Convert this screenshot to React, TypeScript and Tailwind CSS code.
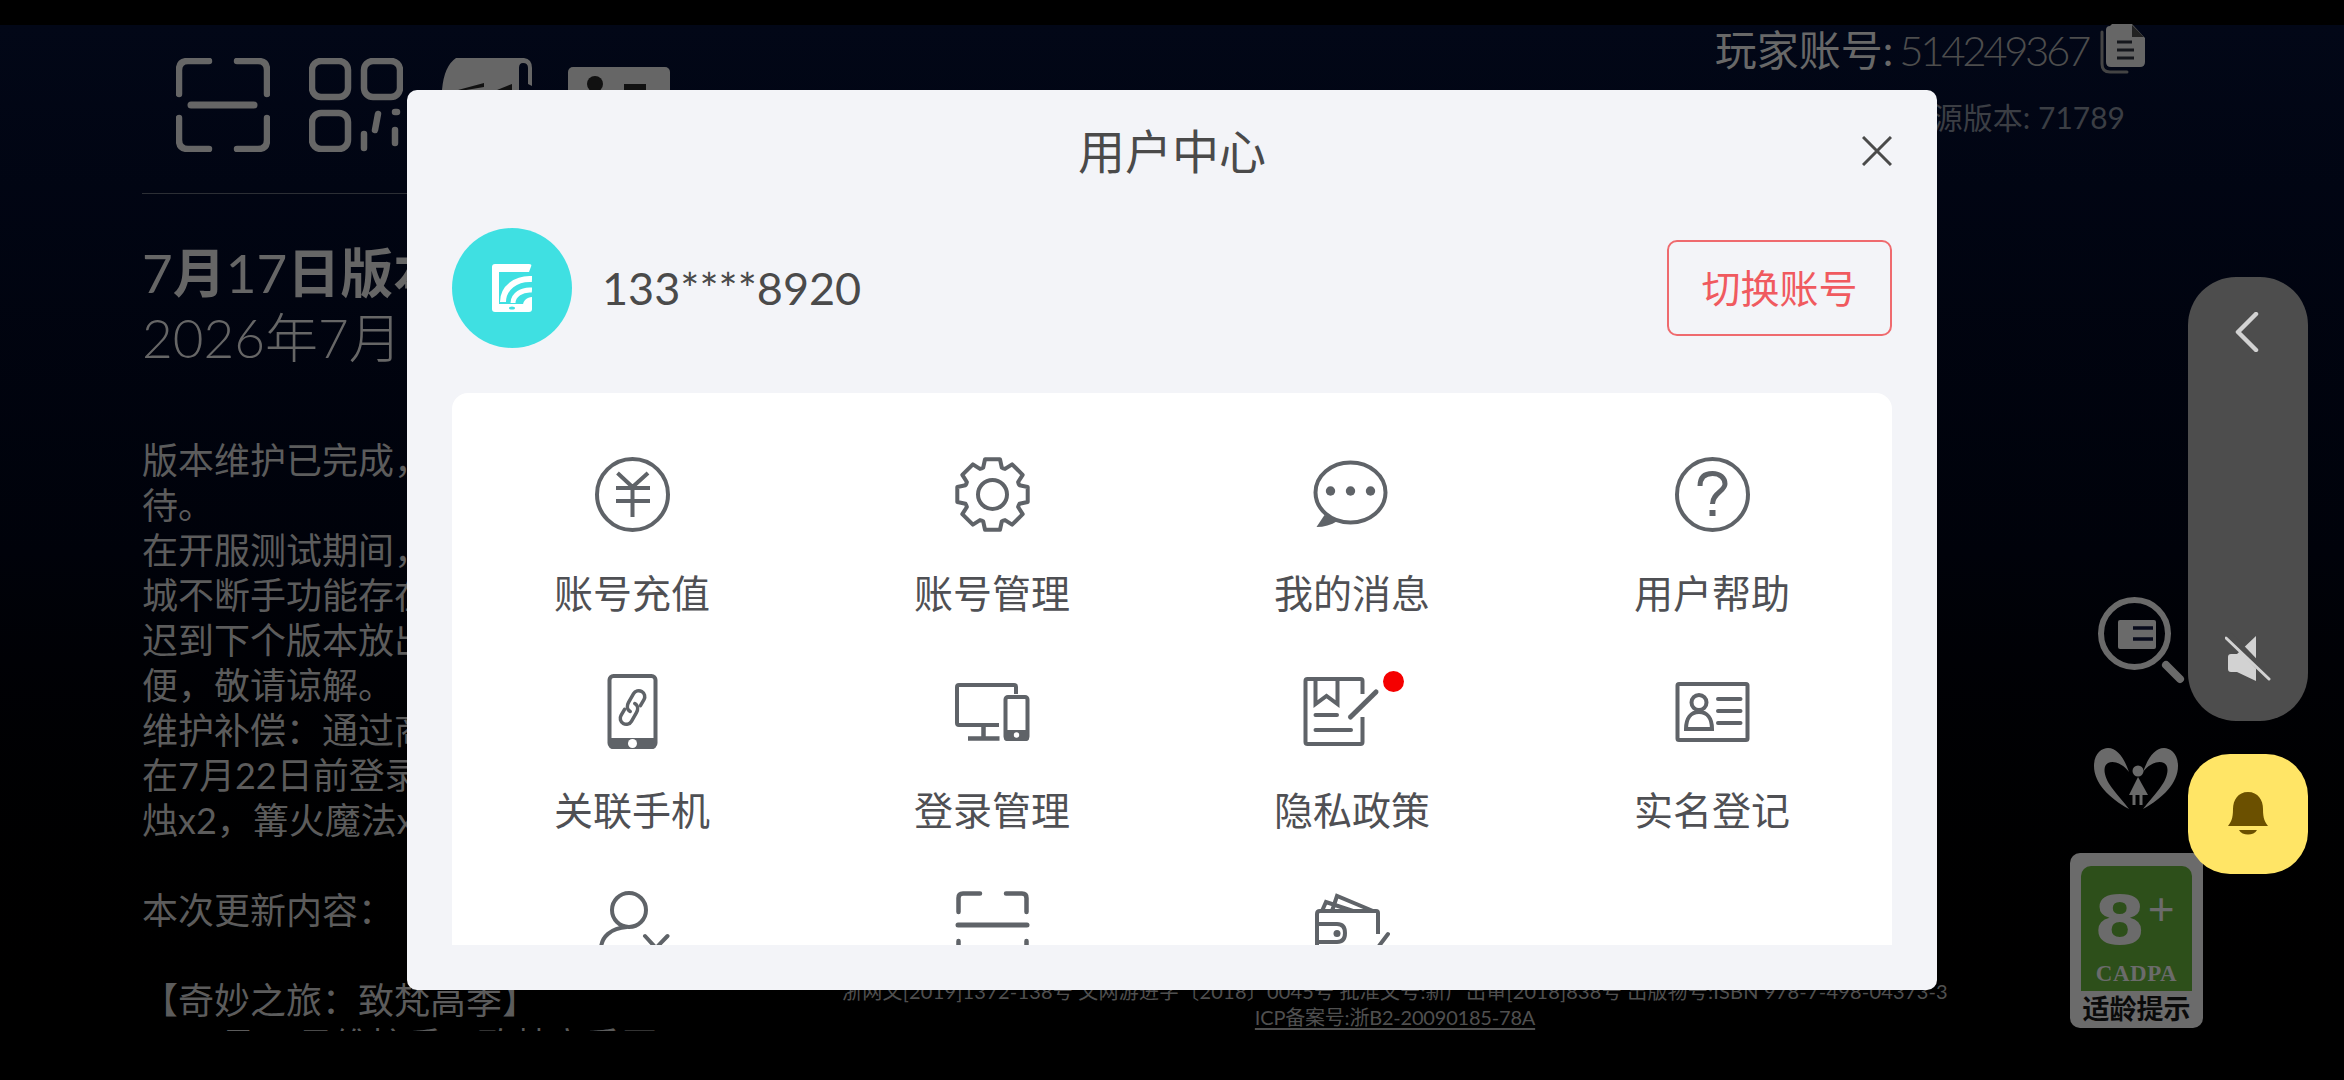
const bodyLines = [
  "版本维护已完成，",
  "待。",
  "在开服测试期间，",
  "城不断手功能存在",
  "迟到下个版本放出",
  "便，敬请谅解。",
  "维护补偿：通过商",
  "在7月22日前登录",
  "烛x2，篝火魔法x",
  "",
  "本次更新内容：",
  "",
  "【奇妙之旅：致梵高季】",
  "1、7月17日维护后，致梵高季开",
];

function gearPath() {
  const cx = 37.5;
  const cy = 37.5;
  const pt = (deg: number, r: number) => {
    const a = (deg * Math.PI) / 180;
    return `${(cx + r * Math.cos(a)).toFixed(2)} ${(cy + r * Math.sin(a)).toFixed(2)}`;
  };
  let d = "";
  for (let i = 0; i < 8; i++) {
    const a = i * 45 - 90;
    d += `${i === 0 ? "M" : "L"}${pt(a - 19, 28.5)} L${pt(a - 12, 36)} L${pt(a + 12, 36)} L${pt(a + 19, 28.5)} `;
    d += `A 9 9 0 0 0 ${pt(a + 26, 28.5)} `;
  }
  return d + "Z";
}

function YenIcon() {
  return (
    <svg width="75" height="75" viewBox="0 0 75 75" fill="none" stroke="#5f6368" strokeWidth="4">
      <circle cx="37.5" cy="37.5" r="35.5" />
      <path d="M22.5 16 L37.5 30 L53 16 M21 31 H55 M21 44 H55 M37.5 30 V60" />
    </svg>
  );
}

function GearIcon() {
  return (
    <svg width="75" height="75" viewBox="0 0 75 75" fill="none" stroke="#5f6368" strokeWidth="4" strokeLinejoin="round">
      <path d={gearPath()} />
      <circle cx="37.5" cy="37.5" r="14.5" />
    </svg>
  );
}

function ChatIcon() {
  return (
    <svg width="75" height="75" viewBox="0 0 75 75" fill="none" className="overflow-visible">
      <ellipse cx="35.5" cy="35.5" rx="35" ry="30" stroke="#5f6368" strokeWidth="4" />
      <path d="M9.5 58 L1.5 70 C9 70 16 68 22.5 64 Z" fill="#5f6368" />
      <circle cx="15.5" cy="34" r="4.7" fill="#5f6368" />
      <circle cx="35.5" cy="34" r="4.7" fill="#5f6368" />
      <circle cx="55.5" cy="34" r="4.7" fill="#5f6368" />
    </svg>
  );
}

function HelpIcon() {
  return (
    <svg width="75" height="75" viewBox="0 0 75 75" fill="none" stroke="#5f6368" strokeWidth="4">
      <circle cx="37.5" cy="37.5" r="35.5" />
      <path d="M25 29 C25 20 30 16.5 37.5 16.5 C45 16.5 50 21 50 27 C50 34 37.5 36 37.5 47" strokeWidth="5" />
      <rect x="34.5" y="53" width="6" height="6" fill="#5f6368" stroke="none" />
    </svg>
  );
}

function PhoneLinkIcon() {
  return (
    <svg width="75" height="75" viewBox="0 0 75 75" fill="none">
      <rect x="14.5" y="2" width="46" height="71" rx="4" stroke="#5f6368" strokeWidth="4" />
      <path d="M14 64 H61 V71 Q61 75 57 75 H18 Q14 75 14 71 Z" fill="#5f6368" />
      <circle cx="37.5" cy="69.5" r="4.5" fill="#fff" />
      <g transform="rotate(30 37.5 33.5)" stroke="#5f6368" strokeWidth="3.5" strokeLinecap="round">
        <path d="M37.5 38 C33 38 31.5 34 31.5 31 V21 a6 6 0 0 1 12 0 V28" />
        <path d="M37.5 29 C42 29 43.5 33 43.5 36 V46 a6 6 0 0 1 -12 0 V39" />
      </g>
    </svg>
  );
}

function DevicesIcon() {
  return (
    <svg width="75" height="75" viewBox="0 0 75 75" fill="none">
      <path d="M61 20 V13 Q61 11 59 11 H4 Q2 11 2 13 V49 Q2 51 4 51 H44" stroke="#5f6368" strokeWidth="4" />
      <path d="M28.5 51 V64 M13 64.5 H44.5" stroke="#5f6368" strokeWidth="4.5" />
      <rect x="50.5" y="23" width="22" height="42" rx="2.5" stroke="#5f6368" strokeWidth="4" />
      <path d="M49 56 H74 V64 Q74 67 71 67 H52 Q49 67 49 64 Z" fill="#5f6368" />
      <circle cx="61.5" cy="61" r="2.7" fill="#fff" />
    </svg>
  );
}

function PrivacyIcon() {
  return (
    <svg width="75" height="75" viewBox="0 0 75 75" fill="none" stroke="#5f6368" strokeWidth="4" className="overflow-visible">
      <path d="M47.5 20 V7 Q47.5 5 45.5 5 H-7.5 Q-9.5 5 -9.5 7 V68 Q-9.5 70 -7.5 70 H45.5 Q47.5 70 47.5 68 V43" />
      <path d="M0.5 5 V30 L11.5 22 L22.5 30 V5" />
      <path d="M0.5 41 H22 M0.5 56 H36" strokeLinecap="round" />
      <path d="M35.5 43 L61 18" strokeWidth="5" strokeLinecap="round" />
    </svg>
  );
}

function IdCardIcon() {
  return (
    <svg width="75" height="75" viewBox="0 0 75 75" fill="none" stroke="#5f6368" strokeWidth="4">
      <rect x="2.5" y="10" width="70" height="56" rx="1.5" />
      <circle cx="24" cy="28.5" r="7.5" />
      <path d="M11 55 C11 44 16 38 24 38 C32 38 37 44 37 55 Z" />
      <path d="M43 25 H65.5 M43 37 H65.5 M43 49 H65.5" strokeLinecap="round" />
    </svg>
  );
}

function PersonCheckIcon() {
  return (
    <svg width="75" height="75" viewBox="0 0 75 75" fill="none" stroke="#5f6368" strokeWidth="4">
      <circle cx="34" cy="19" r="17" />
      <path d="M6 58 C6 46 16 37 32 36" />
      <path d="M50 45 L61 57 L72.5 45" strokeLinecap="round" />
    </svg>
  );
}

function ScannerIcon() {
  return (
    <svg width="75" height="75" viewBox="0 0 75 75" fill="none" stroke="#5f6368" strokeWidth="4.5" strokeLinecap="round">
      <path d="M3.5 21 V7 Q3.5 2.5 8 2.5 H25 M51 2.5 H67 Q71.5 2.5 71.5 7 V21" />
      <path d="M3 34 H72" strokeWidth="5" />
      <path d="M3.5 50 V68 M71.5 50 V68" />
    </svg>
  );
}

function WalletIcon() {
  return (
    <svg width="75" height="75" viewBox="0 0 75 75" fill="none" stroke="#5f6368" strokeWidth="4">
      <path d="M63 43 V22 Q63 20 61 20 H5 Q2 20 2 23 V70" />
      <path d="M7 20 L11 11 L38 20 M17 20 L22 5 L58 20" />
      <path d="M2 33 H22 Q30 33 30 42 Q30 51 22 51 H2" />
      <circle cx="22" cy="42.5" r="3.5" fill="#5f6368" stroke="none" />
      <path d="M64 55 L73 43" strokeLinecap="round" />
    </svg>
  );
}

const menuItems = [
  { label: "账号充值", icon: <YenIcon /> },
  { label: "账号管理", icon: <GearIcon /> },
  { label: "我的消息", icon: <ChatIcon /> },
  { label: "用户帮助", icon: <HelpIcon /> },
  { label: "关联手机", icon: <PhoneLinkIcon /> },
  { label: "登录管理", icon: <DevicesIcon /> },
  { label: "隐私政策", icon: <PrivacyIcon />, dot: true },
  { label: "实名登记", icon: <IdCardIcon /> },
  { label: "账号注销", icon: <PersonCheckIcon /> },
  { label: "扫一扫", icon: <ScannerIcon /> },
  { label: "我的钱包", icon: <WalletIcon /> },
];

function AvatarIcon() {
  return (
    <svg width="40" height="48" viewBox="0 0 40 48" fill="none">
      <rect width="40" height="48" rx="3" fill="#fff" />
      <path d="M7 8 H37 L40 0 V40 H7 Z" fill="#3fe0e2" />
      <path d="M11 38 C11 24 24 14 40 15" stroke="#fff" strokeWidth="6" />
      <path d="M21 39 C21 31 30 25 40 26" stroke="#fff" strokeWidth="5" />
      <path d="M31 41 C31 37 35 33 40 33 V41 Z" fill="#fff" />
      <ellipse cx="20" cy="44" rx="3" ry="1.6" fill="#3fe0e2" />
    </svg>
  );
}

function HeaderIcons() {
  return (
    <div className="flex h-[94px] gap-[39px] pl-[34px]">
      <svg width="94" height="94" viewBox="0 0 94 94" fill="none" stroke="#666" strokeWidth="6.5" strokeLinecap="round">
        <path d="M3 36 V12 Q3 3 12 3 H33 M61 3 H82 Q91 3 91 12 V36" />
        <path d="M15 47 H78" strokeWidth="7" />
        <path d="M3 60 V82 Q3 91 12 91 H33 M61 91 H82 Q91 91 91 82 V60" />
      </svg>
      <svg width="94" height="94" viewBox="0 0 94 94" fill="none" stroke="#666" strokeWidth="6.5" strokeLinecap="round">
        <rect x="3" y="3" width="36" height="36" rx="9" />
        <rect x="55" y="3" width="36" height="36" rx="9" />
        <rect x="3" y="55" width="36" height="36" rx="9" />
        <path d="M69 56 L66 72 M55 76 V90 M86 54 H88 M86 72 V85" />
      </svg>
      <svg width="92" height="94" viewBox="0 0 92 94" fill="none">
        <path d="M14 0 H82 Q90 1 90 10 V28 L86 26 V10 Q86 5 81 5 Q77 5 77 10 V32 H0 Q2 8 14 0 Z" fill="#666" />
        <path d="M16 32 L42 25 V29 L24 32 Z M55 32 L70 26 V32 Z" fill="#111" />
      </svg>
      <svg width="102" height="94" viewBox="0 0 102 94" fill="none" className="-ml-[5px] mt-[9px]">
        <rect width="102" height="60" rx="5" fill="#666" />
        <circle cx="27" cy="17" r="8" fill="#111" />
        <rect x="56" y="17" width="22" height="8" fill="#111" />
      </svg>
    </div>
  );
}

function CopyIcon() {
  return (
    <svg width="45" height="50" viewBox="0 0 45 50" fill="none">
      <path d="M2 8 V40 Q2 48 10 48 H27" stroke="#444" strokeWidth="3" strokeLinecap="round" />
      <path d="M10 2 Q6 2 6 6 V38 Q6 43 11 43 H40 Q45 43 45 38 V14 L32 0 H12 Z" fill="#666" />
      <path d="M32 1 V13 H44 Z" fill="#222" />
      <path d="M17 18 H32 M17 26 H34 M17 34 H34" stroke="#15171c" strokeWidth="3" />
    </svg>
  );
}

function FloatingWidgets() {
  return (
    <>
      <div className="absolute left-[2098px] top-[597px]">
        <svg width="87" height="87" viewBox="0 0 87 87" fill="none">
          <circle cx="36.5" cy="36.5" r="33.5" stroke="#6a6a6a" strokeWidth="6" />
          <rect x="20" y="23" width="38" height="29" rx="2" fill="#6a6a6a" />
          <path d="M35 31 H55 M35 42 H55" stroke="#070a1b" strokeWidth="3.5" />
          <path d="M68 68 L82 82" stroke="#6a6a6a" strokeWidth="8" strokeLinecap="round" />
        </svg>
      </div>
      <div className="absolute left-[2094px] top-[748px]">
        <svg width="84" height="62" viewBox="0 0 84 62" fill="#6a6a6a">
          <path d="M35 61 C15 50 0 35 0 18 C0 5 8 0 14 0 C24 0 31 12 35 24 C29 16 20 12 14 15 C8 18 10 30 18 40 C24 48 30 54 35 61 Z" />
          <path d="M35 61 C15 50 0 35 0 18 C0 5 8 0 14 0 C24 0 31 12 35 24 C29 16 20 12 14 15 C8 18 10 30 18 40 C24 48 30 54 35 61 Z" transform="translate(84 0) scale(-1 1)" />
          <circle cx="44" cy="23" r="5.5" />
          <path d="M44 29 L35 47 H54 Z" />
          <path d="M40 46 V57 M47 46 V57" stroke="#6a6a6a" strokeWidth="3" />
        </svg>
      </div>

      <div className="absolute left-[2070px] top-[853px] flex h-[175px] w-[133px] flex-col items-center rounded-[10px] bg-[#6b6b6b] pt-[13px]">
        <div className="flex h-[125px] w-[111px] flex-col items-center rounded-t-[10px] bg-[#2d4f1a] pt-[22px]">
          <div className="flex h-[66px] items-start pr-[2px] text-[#6b6b6b]">
            <span className="scale-x-[1.1] text-[68px] font-bold leading-[66px] font-['DejaVu_Sans',sans-serif]">8</span>
            <span className="ml-[4px] mt-[-4px] text-[46px] leading-[50px] font-['Liberation_Sans',sans-serif]">+</span>
          </div>
          <span className="mt-[7px] text-[23px] font-bold leading-[26px] tracking-[0.5px] text-[#6b6b6b] font-['Liberation_Serif',serif]">CADPA</span>
        </div>
        <span className="mt-[2px] text-[27px] font-bold leading-[32px] text-[#0a0a0a]">适龄提示</span>
      </div>

      <div className="absolute left-[2188px] top-[277px] flex h-[444px] w-[120px] flex-col items-center justify-between rounded-[48px] bg-[#4d4d4d] pb-[38px] pt-[35px]">
        <svg width="24" height="40" viewBox="0 0 24 40" fill="none" className="-ml-[3px]">
          <path d="M21 2 L3 20 L21 38" stroke="#d2d2d2" strokeWidth="4.5" strokeLinecap="round" strokeLinejoin="round" />
        </svg>
        <svg width="46" height="50" viewBox="0 0 46 50" fill="none">
          <path d="M3 24 Q3 21 6 21 H12 L31 3 V48 L12 39 H6 Q3 39 3 36 Z" fill="#d2d2d2" />
          <path d="M4 2 L44 44" stroke="#4d4d4d" strokeWidth="7" />
          <path d="M1 5 L44 46" stroke="#d2d2d2" strokeWidth="3" strokeLinecap="round" />
        </svg>
      </div>

      <div className="absolute left-[2188px] top-[754px] flex h-[120px] w-[120px] items-center justify-center rounded-[42px] bg-[#ffe566]">
        <svg width="40" height="44" viewBox="0 0 40 44" fill="#6b5000">
          <path d="M20 0 C10 0 5 8 5 17 C5 27 3 30 0 34 H40 C37 30 35 27 35 17 C35 8 30 0 20 0 Z" />
          <path d="M11 38 H29 C26 44 14 44 11 38 Z" />
        </svg>
      </div>
    </>
  );
}

function UserCenterModal() {
  return (
    <div className="absolute left-[407px] top-[90px] flex h-[900px] w-[1530px] flex-col rounded-[10px] bg-[#f3f4f8]">
      <div className="flex h-[122px] items-center justify-between pl-[45px] pr-[45px]">
        <span className="w-[30px]" />
        <h1 className="text-[47px] leading-[60px] text-[#4a4a4a]">用户中心</h1>
        <svg width="30" height="30" viewBox="0 0 30 30" fill="none">
          <path d="M1 1 L29 29 M29 1 L1 29" stroke="#4a4a4a" strokeWidth="3" />
        </svg>
      </div>

      <div className="flex h-[181px] items-start justify-between pl-[45px] pr-[45px] pt-[16px]">
        <div className="flex items-center">
          <div className="flex h-[120px] w-[120px] items-center justify-center rounded-full bg-[#3fe0e2]">
            <AvatarIcon />
          </div>
          <span className="ml-[30px] text-[45px] leading-[60px] text-[#4a4a4a]">133****8920</span>
        </div>
        <button className="mt-[12px] flex h-[96px] w-[225px] items-center justify-center rounded-[10px] border-2 border-[#ef6a6e] text-[39px] text-[#f05a5f]">
          切换账号
        </button>
      </div>

      <div className="mx-[45px] h-[552px] overflow-hidden rounded-t-[16px] bg-white pt-[64px]">
        <div className="grid grid-cols-4 gap-y-[56px]">
          {menuItems.map((item) => (
            <div key={item.label} className="flex flex-col items-center">
              <div className="relative h-[75px] w-[75px]">
                {item.icon}
                {item.dot && <span className="absolute left-[68px] top-[-3px] h-[21px] w-[21px] rounded-full bg-[#f50000]" />}
              </div>
              <span className="mt-[36px] text-[39px] leading-[50px] text-[#4f5054]">{item.label}</span>
            </div>
          ))}
        </div>
      </div>
    </div>
  );
}

export default function App() {
  return (
    <div className="relative flex h-[1080px] w-[2344px] flex-col overflow-hidden bg-black font-['Lato','Noto_Sans_CJK_SC',sans-serif]">
      <div className="h-[25px] shrink-0 bg-black" />
      <main className="flex min-h-0 flex-1 bg-gradient-to-b from-[#020717] via-[#00020a] to-black">
        <section className="w-[800px] shrink-0 pl-[142px]">
          <div className="pt-[33px]">
            <HeaderIcons />
          </div>
          <div className="mt-[41px] h-px bg-[#2c2f35]" />
          <div className="mt-[46px] whitespace-nowrap text-[53px] leading-[65px] text-[#666]">
            <div>
              7<b className="font-bold">月</b>17<b className="font-bold">日版本</b>
            </div>
            <div className="font-light">2026年7月</div>
          </div>
          <div className="mt-[68px] h-[593px] overflow-hidden whitespace-nowrap text-[36px] leading-[45px] text-[#5c5c5c]">
            {bodyLines.map((line, i) => (
              <div key={i} className="h-[45px]">
                {line}
              </div>
            ))}
          </div>
        </section>

        <section className="flex min-w-0 flex-1 flex-col">
          <div className="flex flex-col items-end pr-[199px]">
            <div className="flex h-[50px] items-center text-[42px] leading-[50px]">
              <span className="text-[#686868]">玩家账号:</span>
              <span className="ml-[6px] font-light tracking-[-3.4px] text-[#4d4d4d]">514249367</span>
              <span className="ml-[12px] -mt-[2px]">
                <CopyIcon />
              </span>
            </div>
            <div className="mr-[20px] mt-[22px] text-[30px] leading-[40px] text-[#3b3e44]">资源版本: 71789</div>
          </div>
          <div className="mr-[354px] mb-[48px] mt-auto text-center text-[20px] leading-[29px] text-[#505050] whitespace-nowrap">
            <p className="mb-[-3px] tracking-[0.2px]">浙网文[2019]1372-138号 文网游进字〔2018〕0045号 批准文号:新广出审[2018]838号 出版物号:ISBN 978-7-498-04373-3</p>
            <p className="tracking-[-0.2px] underline underline-offset-[3px]">ICP备案号:浙B2-20090185-78A</p>
          </div>
        </section>
      </main>

      <FloatingWidgets />
      <UserCenterModal />
    </div>
  );
}
